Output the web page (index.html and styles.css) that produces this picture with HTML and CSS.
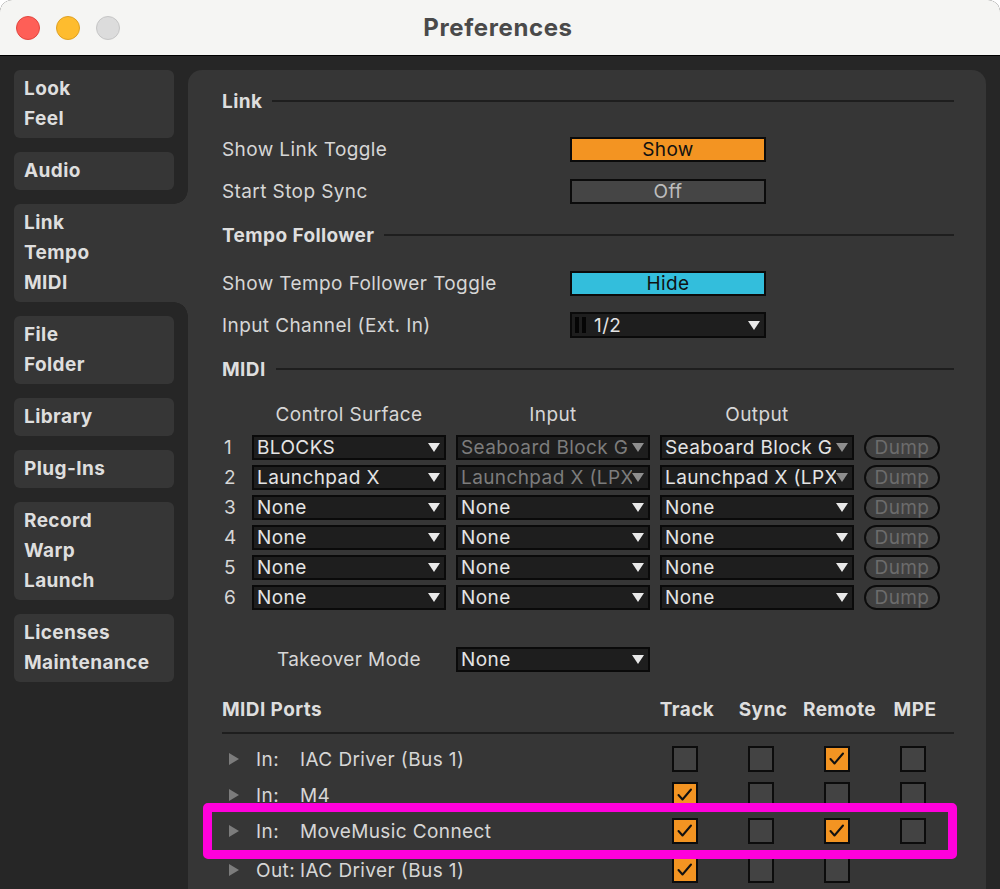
FILE: index.html
```html
<!DOCTYPE html>
<html>
<head>
<meta charset="utf-8">
<title>Preferences</title>
<link rel="stylesheet" href="styles.css">
</head>
<body>
<div class="window">
  <header class="titlebar">
    <div class="lights">
      <span class="light red"></span>
      <span class="light yellow"></span>
      <span class="light gray"></span>
    </div>
    <div class="title">Preferences</div>
    <div></div>
  </header>
  <div class="content">
    <nav class="sidebar">
      <div class="tab"><div>Look</div><div>Feel</div></div>
      <div class="tab"><div>Audio</div></div>
      <div class="tab active"><div>Link</div><div>Tempo</div><div>MIDI</div></div>
      <div class="tab"><div>File</div><div>Folder</div></div>
      <div class="tab"><div>Library</div></div>
      <div class="tab"><div>Plug-Ins</div></div>
      <div class="tab"><div>Record</div><div>Warp</div><div>Launch</div></div>
      <div class="tab"><div>Licenses</div><div>Maintenance</div></div>
    </nav>
    <main class="panel">
      <section class="section">
        <div class="sec-head"><span>Link</span></div>
        <div class="row"><span class="label">Show Link Toggle</span><div class="btn orange">Show</div></div>
        <div class="row"><span class="label">Start Stop Sync</span><div class="btn off">Off</div></div>
      </section>
      <section class="section">
        <div class="sec-head"><span>Tempo Follower</span></div>
        <div class="row"><span class="label">Show Tempo Follower Toggle</span><div class="btn cyan">Hide</div></div>
        <div class="row"><span class="label">Input Channel (Ext. In)</span>
          <div class="dd chan"><span class="bars"><i></i><i></i></span><span class="dd-text">1/2</span><span class="tri"></span></div>
        </div>
      </section>
      <section class="section midi">
        <div class="sec-head"><span>MIDI</span></div>
        <div class="midi-grid">
          <span></span><span class="colhead">Control Surface</span><span class="colhead">Input</span><span class="colhead">Output</span><span></span>

          <span class="num">1</span>
          <div class="dd"><span class="dd-text">BLOCKS</span><span class="tri"></span></div>
          <div class="dd dim"><span class="dd-text">Seaboard Block G</span><span class="tri"></span></div>
          <div class="dd tri-dim"><span class="dd-text">Seaboard Block G</span><span class="tri"></span></div>
          <div class="dump">Dump</div>

          <span class="num">2</span>
          <div class="dd"><span class="dd-text">Launchpad X</span><span class="tri"></span></div>
          <div class="dd dim"><span class="dd-text">Launchpad X (LPX</span><span class="tri"></span></div>
          <div class="dd tri-dim"><span class="dd-text">Launchpad X (LPX</span><span class="tri"></span></div>
          <div class="dump">Dump</div>

          <span class="num">3</span>
          <div class="dd"><span class="dd-text">None</span><span class="tri"></span></div>
          <div class="dd"><span class="dd-text">None</span><span class="tri"></span></div>
          <div class="dd"><span class="dd-text">None</span><span class="tri"></span></div>
          <div class="dump">Dump</div>

          <span class="num">4</span>
          <div class="dd"><span class="dd-text">None</span><span class="tri"></span></div>
          <div class="dd"><span class="dd-text">None</span><span class="tri"></span></div>
          <div class="dd"><span class="dd-text">None</span><span class="tri"></span></div>
          <div class="dump">Dump</div>

          <span class="num">5</span>
          <div class="dd"><span class="dd-text">None</span><span class="tri"></span></div>
          <div class="dd"><span class="dd-text">None</span><span class="tri"></span></div>
          <div class="dd"><span class="dd-text">None</span><span class="tri"></span></div>
          <div class="dump">Dump</div>

          <span class="num">6</span>
          <div class="dd"><span class="dd-text">None</span><span class="tri"></span></div>
          <div class="dd"><span class="dd-text">None</span><span class="tri"></span></div>
          <div class="dd"><span class="dd-text">None</span><span class="tri"></span></div>
          <div class="dump">Dump</div>
        </div>
        <div class="takeover-grid">
          <span></span>
          <span class="colhead">Takeover Mode</span>
          <div class="dd"><span class="dd-text">None</span><span class="tri"></span></div>
        </div>
      </section>
      <section class="ports">
        <div class="ports-head">
          <span class="ports-title">MIDI Ports</span>
          <span class="pcol">Track</span><span class="pcol">Sync</span><span class="pcol">Remote</span><span class="pcol">MPE</span>
        </div>
        <div class="port">
          <span class="expander"></span><span class="dir">In:</span><span class="pname">IAC Driver (Bus 1)</span>
          <span class="cell"><span class="cb"></span></span>
          <span class="cell"><span class="cb"></span></span>
          <span class="cell"><span class="cb on"><svg viewBox="0 0 22 22"><polyline points="4.5,11 8.5,15.5 17,5.5"/></svg></span></span>
          <span class="cell"><span class="cb"></span></span>
        </div>
        <div class="port">
          <span class="expander"></span><span class="dir">In:</span><span class="pname">M4</span>
          <span class="cell"><span class="cb on"><svg viewBox="0 0 22 22"><polyline points="4.5,11 8.5,15.5 17,5.5"/></svg></span></span>
          <span class="cell"><span class="cb"></span></span>
          <span class="cell"><span class="cb"></span></span>
          <span class="cell"><span class="cb"></span></span>
        </div>
        <div class="port">
          <span class="expander"></span><span class="dir">In:</span><span class="pname">MoveMusic Connect</span>
          <span class="cell"><span class="cb on"><svg viewBox="0 0 22 22"><polyline points="4.5,11 8.5,15.5 17,5.5"/></svg></span></span>
          <span class="cell"><span class="cb"></span></span>
          <span class="cell"><span class="cb on"><svg viewBox="0 0 22 22"><polyline points="4.5,11 8.5,15.5 17,5.5"/></svg></span></span>
          <span class="cell"><span class="cb"></span></span>
        </div>
        <div class="port out">
          <span class="expander"></span><span class="dir">Out:</span><span class="pname">IAC Driver (Bus 1)</span>
          <span class="cell"><span class="cb on"><svg viewBox="0 0 22 22"><polyline points="4.5,11 8.5,15.5 17,5.5"/></svg></span></span>
          <span class="cell"><span class="cb"></span></span>
          <span class="cell"><span class="cb"></span></span>
          <span class="cell"></span>
        </div>
      </section>
    </main>
  </div>
  <div class="highlight"></div>
</div>
</body>
</html>
```

FILE: styles.css
```css
html, body {
  margin: 0;
  padding: 0;
  background: #ffffff;
}
body {
  font-family: Inter, "Liberation Sans", sans-serif;
  font-size: 19px;
  letter-spacing: 0.4px;
  color: #d6d6d6;
}
.window {
  position: relative;
  width: 1000px;
  height: 889px;
  overflow: hidden;
  border-radius: 12px 12px 0 0;
  background: #262626;
  display: flex;
  flex-direction: column;
}
.titlebar {
  height: 55px;
  flex: none;
  background: #f5f5f3;
  border-bottom: 1px solid #000;
  display: grid;
  grid-template-columns: 1fr auto 1fr;
  align-items: center;
}
.lights {
  display: flex;
  gap: 16px;
  padding-left: 16px;
}
.light {
  width: 24px;
  height: 24px;
  border-radius: 50%;
  box-sizing: border-box;
}
.light.red { background: #fe5f57; border: 1px solid #e2463f; }
.light.yellow { background: #febc2e; border: 1px solid #dfa123; }
.light.gray { background: #dcdcdc; border: 1px solid #c6c6c6; }
.title {
  font-weight: 700;
  font-size: 24px;
  letter-spacing: 0.6px;
  color: #4a4a4a;
  margin-top: -1px;
  margin-left: -4px;
}
.content {
  flex: 1;
  display: flex;
  padding: 14px 14px 0 14px;
  min-height: 0;
}
.sidebar {
  width: 174px;
  flex: none;
  display: flex;
  flex-direction: column;
  gap: 14px;
}
.tab {
  position: relative;
  width: 160px;
  box-sizing: border-box;
  padding: 4px 0 4px 10px;
  background: #363636;
  border-radius: 6px;
  font-weight: 700;
  line-height: 30px;
  color: #dedede;
}
.tab.active {
  width: 174px;
  border-radius: 6px 0 0 6px;
}
.tab.active::before,
.tab.active::after {
  content: "";
  position: absolute;
  right: 0;
  width: 14px;
  height: 14px;
}
.tab.active::before {
  top: -14px;
  background: radial-gradient(circle at 0 0, #262626 13.5px, #363636 14px);
}
.tab.active::after {
  bottom: -14px;
  background: radial-gradient(circle at 0 100%, #262626 13.5px, #363636 14px);
}
.panel {
  flex: 1;
  background: #363636;
  border-radius: 14px 14px 0 0;
  padding: 16px 32px 0 34px;
}
.section {
  margin-bottom: 8px;
}
.sec-head {
  height: 30px;
  display: flex;
  align-items: center;
  gap: 10px;
  font-weight: 700;
  color: #dedede;
  margin-bottom: 12px;
}
.sec-head::after {
  content: "";
  flex: 1;
  height: 2px;
  background: #1e1e1e;
}
.row {
  height: 42px;
  display: flex;
  align-items: center;
}
.label {
  width: 348px;
}
.btn {
  width: 196px;
  height: 25px;
  box-sizing: border-box;
  border: 2px solid #0b0b0b;
  text-align: center;
  line-height: 21px;
}
.btn.orange { background: #f39422; color: #111; }
.btn.off { background: #454545; color: #bdbdbd; }
.btn.cyan { background: #33bedc; color: #111; }
.dd {
  height: 25px;
  box-sizing: border-box;
  border: 2px solid #0a0a0a;
  background: #1e1e1e;
  display: flex;
  align-items: center;
  padding: 0 4px 0 3px;
  color: #e4e4e4;
  overflow: hidden;
}
.dd-text {
  flex: 1;
  min-width: 0;
  overflow: hidden;
  white-space: nowrap;
  line-height: 21px;
}
.tri {
  flex: none;
  width: 0;
  height: 0;
  border-left: 6.5px solid transparent;
  border-right: 6.5px solid transparent;
  border-top: 9px solid #e8e8e8;
}
.dd.dim .dd-text { color: #7c7c7c; }
.dd.dim .tri, .dd.tri-dim .tri { border-top-color: #8e8e8e; }
.dd.chan {
  width: 196px;
  height: 26px;
}
.bars {
  display: flex;
  gap: 3px;
  margin-right: 8px;
}
.bars i {
  width: 4px;
  height: 16px;
  background: #050505;
}
.midi-grid,
.takeover-grid {
  display: grid;
  grid-template-columns: 20px 194px 194px 194px 76px;
  column-gap: 10px;
  align-items: center;
}
.midi-grid {
  grid-template-rows: 36px repeat(6, 30px);
}
.takeover-grid {
  margin-top: 26px;
  height: 42px;
}
.colhead {
  text-align: center;
}
.num {
  padding-left: 2px;
}
.dump {
  height: 25px;
  box-sizing: border-box;
  border: 2px solid #0c0c0c;
  border-radius: 13px;
  background: #404040;
  color: #6c6c6c;
  text-align: center;
  line-height: 21px;
}
.ports {
  margin-top: 14px;
}
.ports-head {
  display: flex;
  align-items: center;
  height: 30px;
  padding: 0 3px 8px 0;
  border-bottom: 2px solid #1e1e1e;
  font-weight: 700;
  color: #dedede;
}
.ports-title {
  flex: 1;
}
.pcol {
  width: 76px;
  text-align: center;
  padding-left: 4px;
  box-sizing: border-box;
}
.port {
  display: flex;
  align-items: center;
  height: 36px;
  padding-right: 3px;
}
.port:nth-child(2) {
  margin-top: 7px;
}
.port.out {
  margin-top: 3px;
}
.expander {
  width: 0;
  height: 0;
  margin: 0 17px 0 7px;
  border-top: 6.5px solid transparent;
  border-bottom: 6.5px solid transparent;
  border-left: 10px solid #7c7c7c;
}
.dir {
  min-width: 40px;
  margin-right: 4px;
}
.pname {
  flex: 1;
}
.cell {
  width: 76px;
  display: flex;
  justify-content: center;
}
.cb {
  width: 26px;
  height: 26px;
  box-sizing: border-box;
  border: 2px solid #0c0c0c;
  background: #434343;
}
.cb.on {
  background: #f39422;
}
.cb svg {
  display: block;
  width: 22px;
  height: 22px;
}
.cb polyline {
  fill: none;
  stroke: #111;
  stroke-width: 2;
  stroke-linecap: round;
  stroke-linejoin: round;
}
.highlight {
  position: absolute;
  left: 203px;
  top: 803px;
  width: 754px;
  height: 56px;
  box-sizing: border-box;
  border: 9px solid #ff00dc;
  border-radius: 5px;
}
```
